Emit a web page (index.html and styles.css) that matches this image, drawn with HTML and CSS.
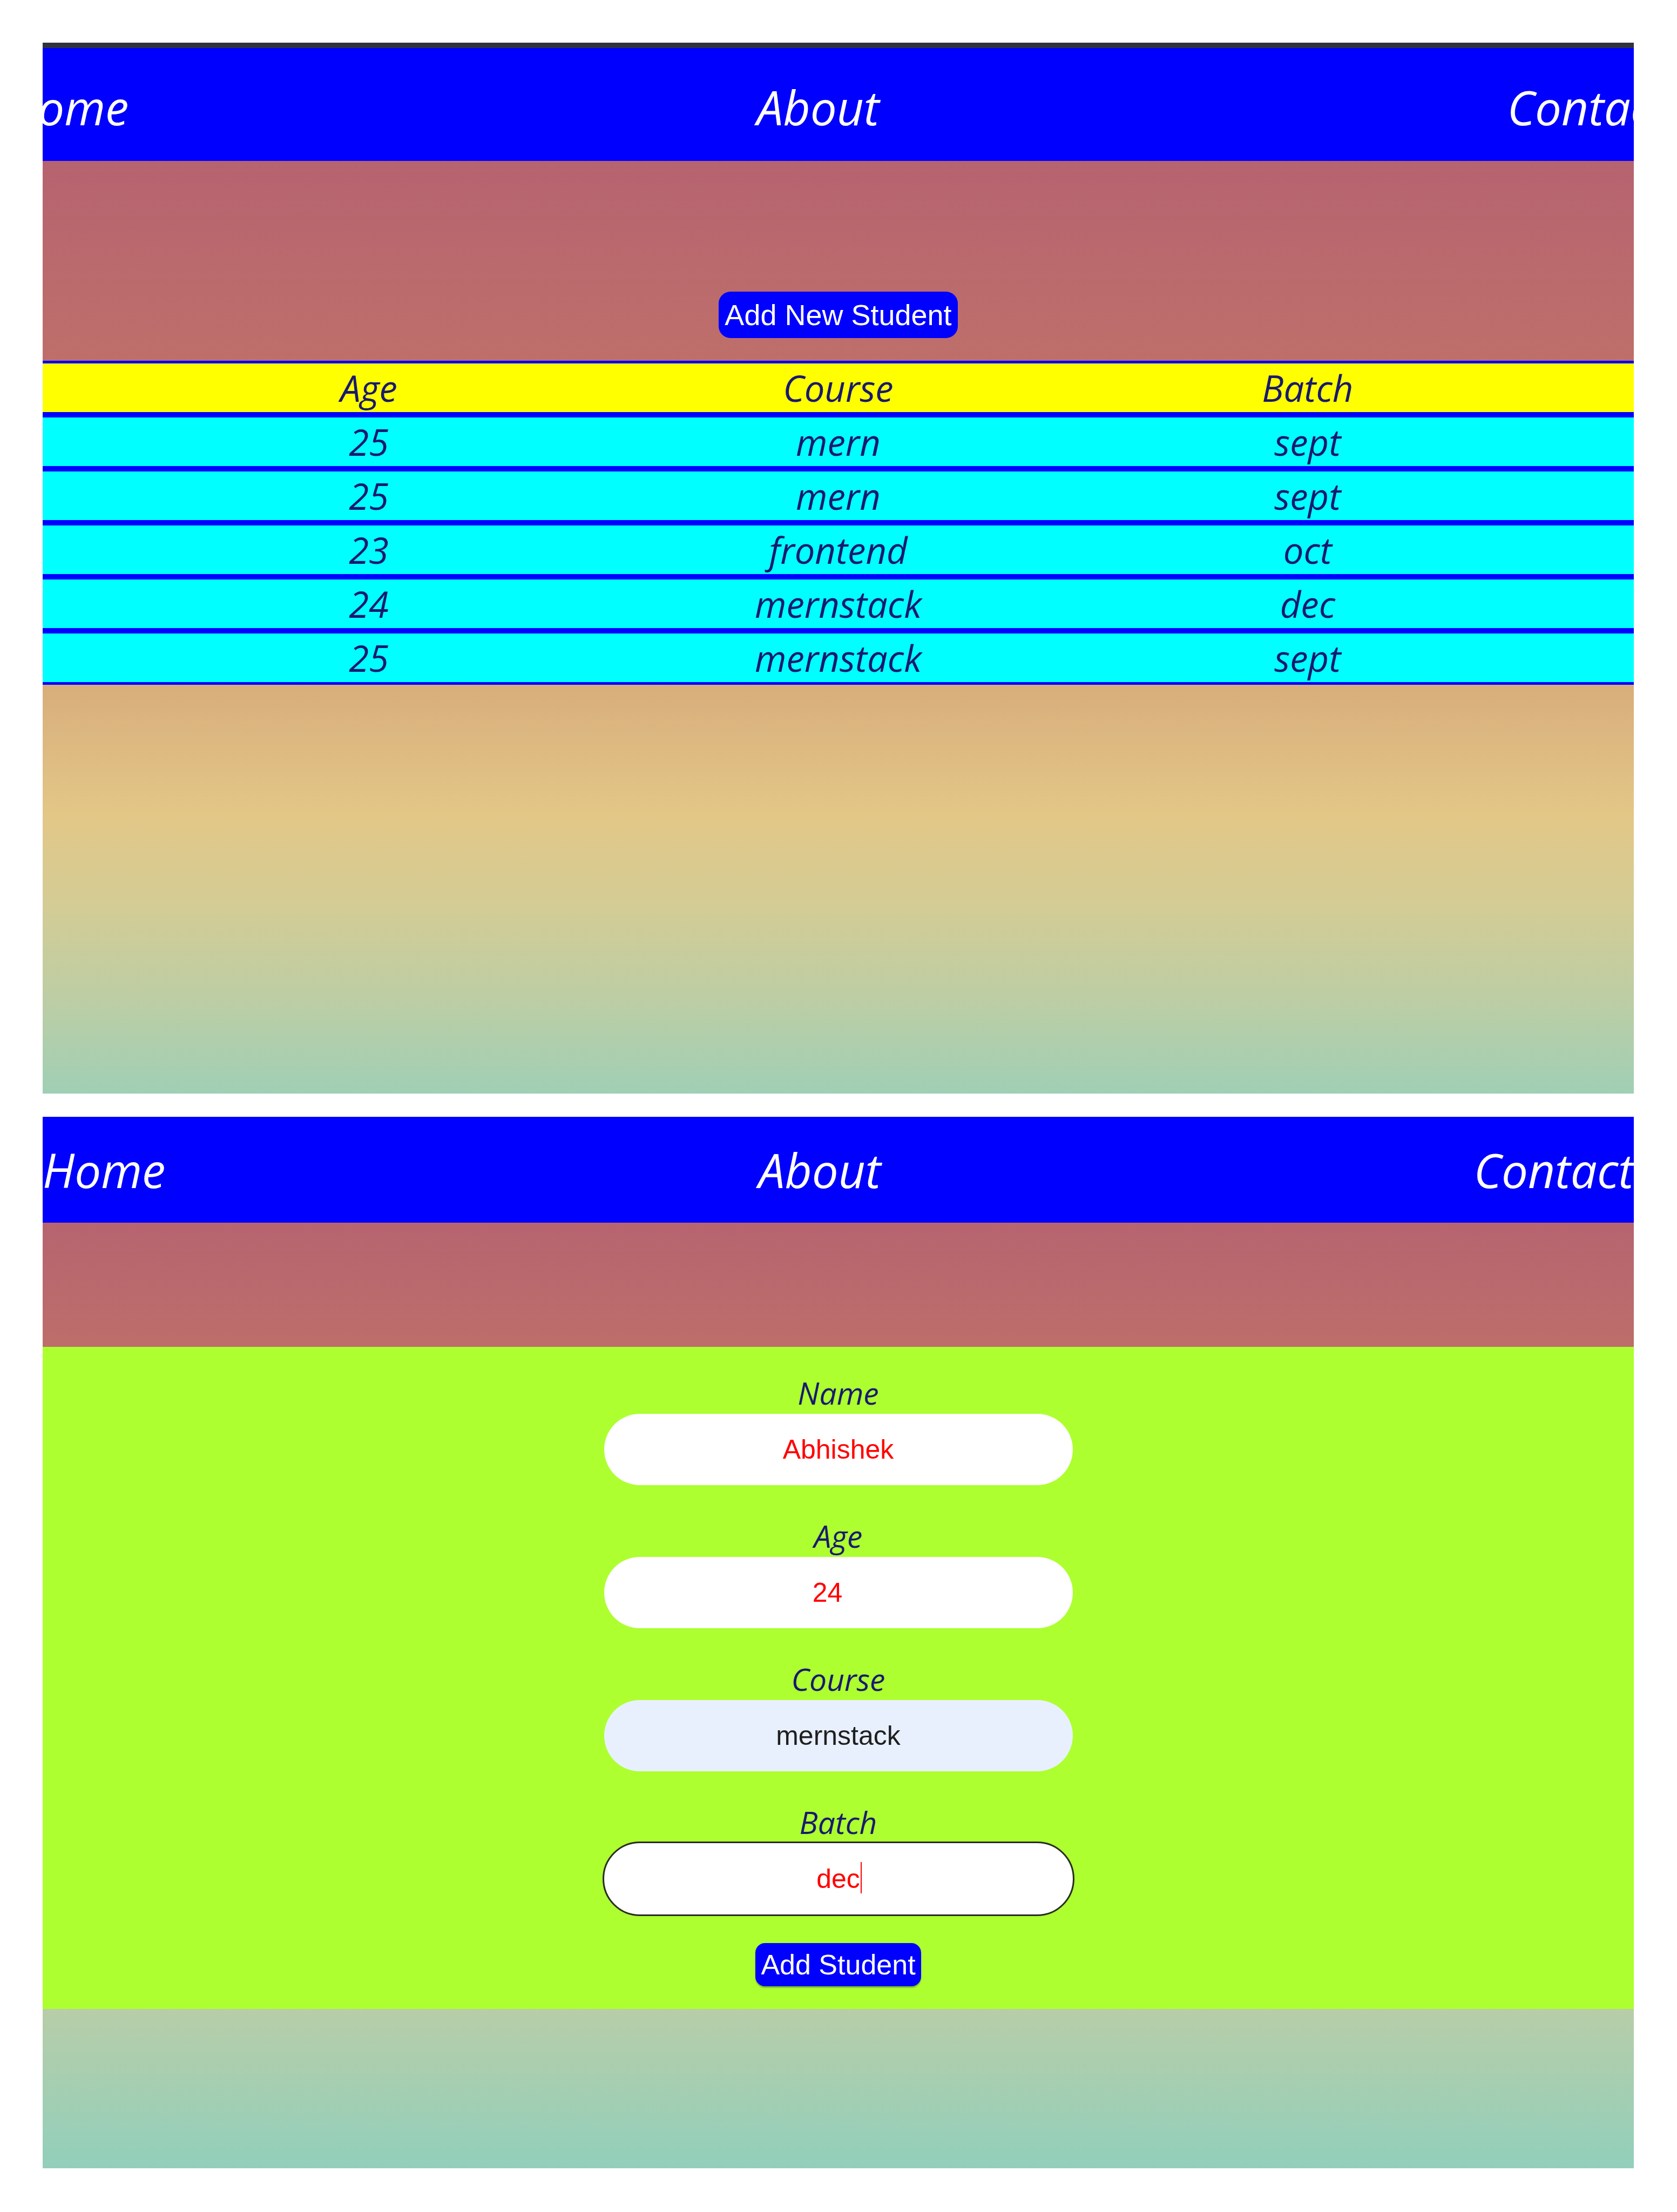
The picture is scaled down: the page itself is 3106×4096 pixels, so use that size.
FILE: index.html
```html
<!DOCTYPE html>
<html lang="en">
<head>
<meta charset="utf-8">
<title>Students</title>
<link rel="stylesheet" href="styles.css">
</head>
<body>
<div class="page">
  <section class="screen screen-list">
    <div class="statusbar"></div>
    <nav class="nav nav-list">
      <div class="nav-track">
        <a class="nav-link" href="#">Home</a>
        <a class="nav-link" href="#">About</a>
        <a class="nav-link" href="#">Contact</a>
      </div>
    </nav>
    <main class="content content-list">
      <div class="toolbar">
        <button class="btn btn-add-new" type="button">Add New Student</button>
      </div>
      <table class="students">
        <colgroup>
          <col class="col-side">
          <col class="col-mid">
          <col class="col-side">
        </colgroup>
        <thead>
          <tr><th>Age</th><th>Course</th><th>Batch</th></tr>
        </thead>
        <tbody>
          <tr><td>25</td><td>mern</td><td>sept</td></tr>
          <tr><td>25</td><td>mern</td><td>sept</td></tr>
          <tr><td>23</td><td>frontend</td><td>oct</td></tr>
          <tr><td>24</td><td>mernstack</td><td>dec</td></tr>
          <tr><td>25</td><td>mernstack</td><td>sept</td></tr>
        </tbody>
      </table>
    </main>
  </section>

  <section class="screen screen-form">
    <nav class="nav nav-form">
      <div class="nav-track">
        <a class="nav-link" href="#">Home</a>
        <a class="nav-link" href="#">About</a>
        <a class="nav-link" href="#">Contact</a>
      </div>
    </nav>
    <main class="content content-form">
      <div class="hero-spacer"></div>
      <form class="student-form">
        <div class="field">
          <label class="field-label" for="f-name">Name</label>
          <input class="field-input" id="f-name" type="text" value="Abhishek">
        </div>
        <div class="field">
          <label class="field-label" for="f-age">Age</label>
          <input class="field-input field-input-number" id="f-age" type="text" value="24">
        </div>
        <div class="field">
          <label class="field-label" for="f-course">Course</label>
          <input class="field-input field-input-autofill" id="f-course" type="text" value="mernstack">
        </div>
        <div class="field">
          <label class="field-label" for="f-batch">Batch</label>
          <div class="input-wrap">
            <input class="field-input field-input-focused" id="f-batch" type="text" value="dec">
            <span class="caret"></span>
          </div>
        </div>
        <button class="btn btn-submit" type="button">Add Student</button>
      </form>
    </main>
  </section>
</div>
</body>
</html>
```

FILE: styles.css
```css
* {
  box-sizing: border-box;
}

html,
body {
  margin: 0;
  padding: 0;
  background: #ffffff;
}

body {
  font-family: "Open Sans", "DejaVu Sans", sans-serif;
}

.page {
  padding: 79px 80px 0 79px;
  display: flex;
  flex-direction: column;
  gap: 43px;
}

.screen {
  display: flex;
  flex-direction: column;
}

.screen-list {
  height: 1946px;
}

.screen-form {
  height: 1947px;
}

.statusbar {
  flex: none;
  height: 10px;
  background: #30333e;
}

.nav {
  flex: none;
  display: flex;
  align-items: center;
  background: #0000ff;
  overflow: hidden;
}

.nav-list {
  height: 209px;
  padding-top: 9px;
}

.nav-form {
  height: 196px;
}

.nav-track {
  flex: 1;
  display: flex;
  justify-content: space-between;
  align-items: center;
}

.nav-list .nav-track {
  margin: 0 -62px 0 -68px;
}

.nav-link {
  color: #ffffff;
  font-style: italic;
  font-size: 87px;
  line-height: normal;
  text-decoration: none;
}

.content {
  flex: 1;
  display: flex;
  flex-direction: column;
}

.content-list {
  background: linear-gradient(to bottom,
      #b66370 0%,
      #be6f6a 21.4%,
      #d8ad7b 56.2%,
      #e3c787 70%,
      #d3cc95 80%,
      #bfcda3 89%,
      #a0cfb5 100%);
}

.content-form {
  background: linear-gradient(to bottom,
      #b66470 0%,
      #bd6e6a 13.1%,
      #dcb07c 35%,
      #e3c787 50%,
      #b8cda8 83%,
      #92cfbb 100%);
}

.toolbar {
  flex: none;
  height: 370px;
  padding-top: 242px;
  display: flex;
  justify-content: center;
  align-items: flex-start;
}

.btn {
  font-family: "Liberation Sans", Arial, sans-serif;
  color: #ffffff;
  background: #0000ff;
  border: none;
  cursor: pointer;
}

.btn-add-new {
  font-size: 54px;
  height: 86px;
  padding: 0 11px;
  border-radius: 22px;
}

.students {
  width: 100%;
  border-collapse: separate;
  border-spacing: 0;
  table-layout: fixed;
}

.col-side {
  width: 41%;
}

.col-mid {
  width: 18%;
}

.students th,
.students td {
  padding: 0;
  border-top: 5px solid #0000ff;
  border-bottom: 5px solid #0000ff;
  text-align: center;
  font-style: italic;
  font-weight: normal;
  font-size: 67px;
  line-height: 90px;
  color: #191970;
}

.students th {
  background: #ffff00;
}

.students td {
  background: #00ffff;
}

.hero-spacer {
  flex: none;
  height: 230px;
}

.student-form {
  flex: none;
  background: #adff2f;
  padding: 46px 0 42px;
  display: flex;
  flex-direction: column;
  align-items: center;
}

.field {
  display: flex;
  flex-direction: column;
  align-items: center;
}

.field + .field {
  margin-top: 55px;
}

.field-label {
  font-style: italic;
  font-size: 57px;
  line-height: 78px;
  color: #191970;
}

.field-input {
  display: block;
  width: 868px;
  height: 132px;
  padding: 0;
  border: none;
  border-radius: 66px;
  background: #ffffff;
  color: #ff0000;
  font-family: "Liberation Sans", Arial, sans-serif;
  font-size: 50px;
  text-align: center;
  outline: none;
}

.field-input-number {
  padding-right: 40px;
}

.field-input-autofill {
  background: #e8f0fe;
  color: #1f1f1f;
}

.input-wrap {
  position: relative;
}

.field-input-focused {
  outline: 3px solid #2a2a2a;
}

.caret {
  position: absolute;
  left: calc(50% + 41px);
  top: 35px;
  width: 2px;
  height: 58px;
  background: #ff0000;
}

.btn-submit {
  margin-top: 53px;
  font-size: 52px;
  height: 80px;
  padding: 0 10px;
  border-radius: 18px;
  box-shadow: 0 3px 2px rgba(0, 0, 0, 0.25);
}
```
